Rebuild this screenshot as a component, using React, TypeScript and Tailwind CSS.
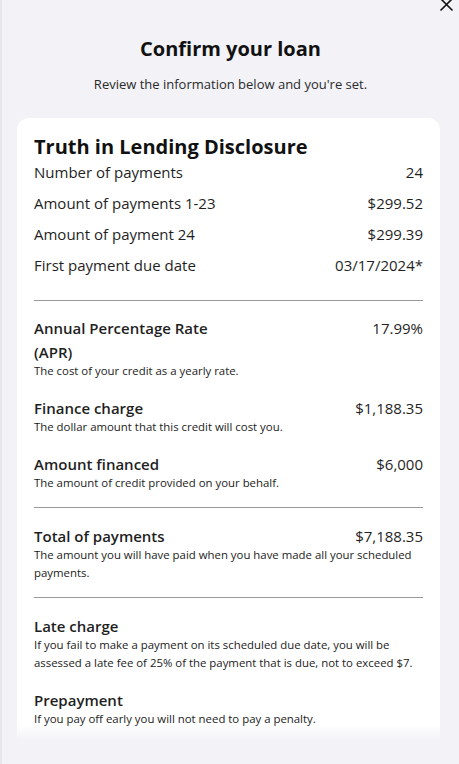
import React from "react";

const font = { fontFamily: '"Open Sans", "Noto Sans", sans-serif' };

function Row({ label, value }: { label: string; value: string }) {
  return (
    <div className="flex justify-between items-center h-[31px] text-[15px] text-[#1f1f1f]">
      <span>{label}</span>
      <span>{value}</span>
    </div>
  );
}

function Item({
  label,
  value,
  desc,
}: {
  label: React.ReactNode;
  value?: string;
  desc: React.ReactNode;
}) {
  return (
    <div className="flex flex-col">
      <div className="flex justify-between items-start text-[15px] text-[#1f1f1f]">
        <span className="font-semibold leading-[24px]">{label}</span>
        {value && <span className="leading-[24px]">{value}</span>}
      </div>
      <div className="-mt-[2px] text-[11.4px] leading-[18px] text-[#222]">{desc}</div>
    </div>
  );
}

function Divider() {
  return <div className="h-px bg-[#9a9a9a]" />;
}

export default function App() {
  return (
    <div
      className="relative w-[459px] h-[764px] overflow-hidden bg-[#f2f2f7] border-l-2 border-[#e6e6ec]"
      style={font}
    >
      <button className="absolute right-[5px] top-[-3px] text-[#111]">
        <svg width="15" height="15" viewBox="0 0 15 15" fill="none" stroke="currentColor" strokeWidth="1.6">
          <path d="M1.5 1.5L13.5 13.5M13.5 1.5L1.5 13.5" />
        </svg>
      </button>
      <div className="flex flex-col items-center pt-[35px]">
        <h1 className="text-[20px] font-bold leading-[28px] text-[#111]">Confirm your loan</h1>
        <p className="mt-[12px] text-[13px] leading-[18px] text-[#2a2a2a]">
          Review the information below and you're set.
        </p>
      </div>
      <div className="relative mt-[25px] ml-[15px] mr-[19px] bg-white rounded-t-[12px] px-[17px] pt-[15px] h-[624px]">
        <h2 className="text-[20px] font-bold leading-[28px] text-[#111]">Truth in Lending Disclosure</h2>
        <div className="flex flex-col -mt-[4px]">
          <Row label="Number of payments" value="24" />
          <Row label="Amount of payments 1-23" value="$299.52" />
          <Row label="Amount of payment 24" value="$299.39" />
          <Row label="First payment due date" value="03/17/2024*" />
        </div>
        <div className="mt-[19px]">
          <Divider />
        </div>
        <div className="flex flex-col gap-[16px] pt-[15px] pb-[15px]">
          <Item
            label={
              <>
                Annual Percentage Rate
                <br />
                (APR)
              </>
            }
            value="17.99%"
            desc="The cost of your credit as a yearly rate."
          />
          <Item label="Finance charge" value="$1,188.35" desc="The dollar amount that this credit will cost you." />
          <Item label="Amount financed" value="$6,000" desc="The amount of credit provided on your behalf." />
        </div>
        <Divider />
        <div className="pt-[16px] pb-[15px]">
          <Item
            label="Total of payments"
            value="$7,188.35"
            desc="The amount you will have paid when you have made all your scheduled payments."
          />
        </div>
        <Divider />
        <div className="flex flex-col gap-[16px] pt-[16px]">
          <Item
            label="Late charge"
            desc="If you fail to make a payment on its scheduled due date, you will be assessed a late fee of 25% of the payment that is due, not to exceed $7."
          />
          <Item label="Prepayment" desc="If you pay off early you will not need to pay a penalty." />
        </div>
        <div className="absolute left-0 right-0 bottom-0 h-[18px] bg-gradient-to-b from-white/0 to-[#f2f2f7]" />
      </div>
    </div>
  );
}
